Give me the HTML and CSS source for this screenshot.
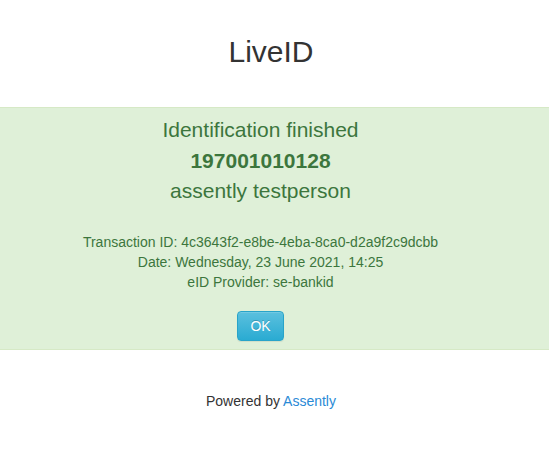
FILE: index.html
```html
<!DOCTYPE html>
<html>
<head>
<meta charset="utf-8">
<link rel="stylesheet" href="styles.css">
</head>
<body>
<header class="header">
  <h1 class="title">LiveID</h1>
</header>
<section class="result">
  <div class="summary">
    <div class="line">Identification finished</div>
    <div class="line strong">197001010128</div>
    <div class="line">assently testperson</div>
  </div>
  <div class="details">
    <div>Transaction ID: 4c3643f2-e8be-4eba-8ca0-d2a9f2c9dcbb</div>
    <div>Date: Wednesday, 23 June 2021, 14:25</div>
    <div>eID Provider: se-bankid</div>
  </div>
  <div class="actions">
    <button class="btn-ok" type="button">OK</button>
  </div>
</section>
<footer class="footer">
  Powered by <a class="link" href="#">Assently</a>
</footer>
</body>
</html>
```
FILE: styles.css
```css
html, body {
  margin: 0;
  padding: 0;
  background: #fff;
}
body {
  font-family: "Liberation Sans", Arial, Helvetica, sans-serif;
  font-size: 14px;
  line-height: 20px;
  color: #333;
}
.header {
  box-sizing: border-box;
  height: 107px;
  padding: 35px 7px 0 0;
  text-align: center;
}
.title {
  margin: 0;
  font-size: 30px;
  line-height: 34px;
  font-weight: normal;
  color: #333;
}
.result {
  box-sizing: border-box;
  height: 243px;
  background: #dff0d8;
  border-top: 1px solid #d6e9c6;
  border-bottom: 1px solid #d6e9c6;
  color: #3c763d;
  text-align: center;
  padding: 7px 43px 0 15px;
}
.summary .line {
  font-size: 21px;
  line-height: 30.5px;
}
.summary .strong {
  font-weight: bold;
}
.details {
  margin-top: 25px;
  line-height: 20px;
}
.actions {
  margin-top: 19px;
}
.btn-ok {
  box-sizing: border-box;
  width: 47px;
  height: 30px;
  padding: 4px 12px;
  font-family: "Liberation Sans", Arial, sans-serif;
  font-size: 14px;
  line-height: 20px;
  color: #fff;
  text-shadow: 0 -1px 0 rgba(0,0,0,0.2);
  background: linear-gradient(to bottom, #5bc0de 0%, #2aabd2 100%);
  border: 1px solid #28a4c9;
  border-radius: 4px;
  box-shadow: inset 0 1px 0 rgba(255,255,255,0.15), 0 1px 1px rgba(0,0,0,0.075);
  cursor: pointer;
}
.footer {
  padding: 41px 7px 0 0;
  text-align: center;
  line-height: 20px;
}
.link {
  color: #2a8ad6;
  text-decoration: none;
}
```
